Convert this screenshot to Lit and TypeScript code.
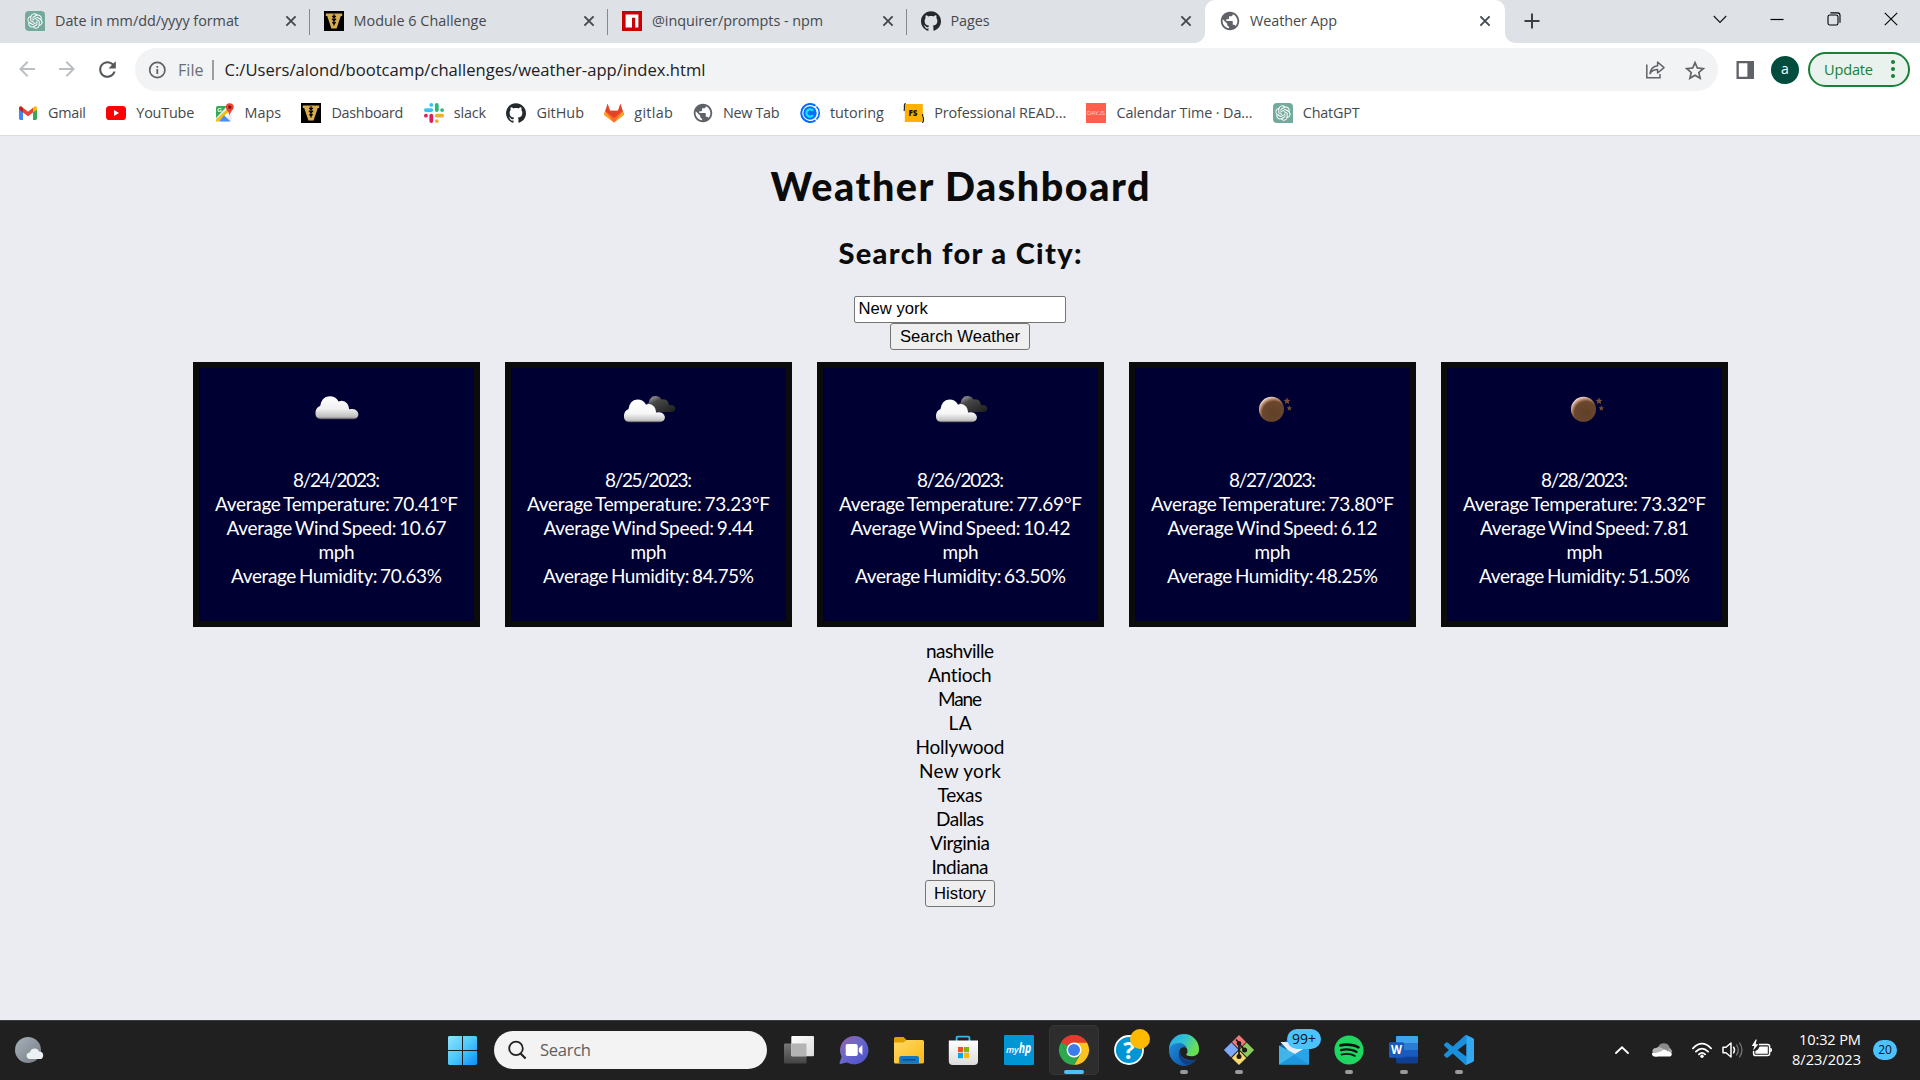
import { LitElement, html, css, svg, nothing } from "lit";
import { customElement, property } from "lit/decorators.js";

/** A single line of text tracked so that it occupies the given width. */
@customElement("fit-text")
class FitText extends LitElement {
  @property() text = "";
  @property({ type: Number }) w = 0;
  static styles = css`
    :host { display: inline-block; white-space: nowrap; text-align: left; }
    .t { display: inline-block; }
  `;
  updated() {
    const t = this.renderRoot.querySelector(".t") as HTMLElement;
    t.style.letterSpacing = "0px";
    const natural = t.getBoundingClientRect().width;
    t.style.letterSpacing = (this.w - natural) / Math.max(1, this.text.length - 1) + "px";
    this.style.width = this.w + "px";
  }
  render() {
    return html`<span class="t">${this.text}</span>`;
  }
}

const fit = (text: string, w: number) => html`<fit-text .text=${text} .w=${w}></fit-text>`;

const pic = (w: number, h: number, box: string, content: unknown) =>
  html`<svg class="pic" width=${w} height=${h} viewBox=${box}>${content}</svg>`;

const knot = "M22.2819 9.8211a5.9847 5.9847 0 0 0-.5157-4.9108 6.0462 6.0462 0 0 0-6.5098-2.9A6.0651 6.0651 0 0 0 4.9807 4.1818a5.9847 5.9847 0 0 0-3.9977 2.9 6.0462 6.0462 0 0 0 .7427 7.0966 5.98 5.98 0 0 0 .511 4.9107 6.051 6.051 0 0 0 6.5146 2.9001A5.9847 5.9847 0 0 0 13.2599 24a6.0557 6.0557 0 0 0 5.7718-4.2058 5.9894 5.9894 0 0 0 3.9977-2.9001 6.0557 6.0557 0 0 0-.7475-7.0729zm-9.022 12.6081a4.4755 4.4755 0 0 1-2.8764-1.0408l.1419-.0804 4.7783-2.7582a.7948.7948 0 0 0 .3927-.6813v-6.7369l2.02 1.1686a.071.071 0 0 1 .038.052v5.5826a4.504 4.504 0 0 1-4.4945 4.4944zm-9.6607-4.1254a4.4708 4.4708 0 0 1-.5346-3.0137l.142.0852 4.783 2.7582a.7712.7712 0 0 0 .7806 0l5.8428-3.3685v2.3324a.0804.0804 0 0 1-.0332.0615L9.74 19.9502a4.4992 4.4992 0 0 1-6.1408-1.6464zM2.3408 7.8956a4.485 4.485 0 0 1 2.3655-1.9728V11.6a.7664.7664 0 0 0 .3879.6765l5.8144 3.3543-2.0201 1.1685a.0757.0757 0 0 1-.071 0l-4.8303-2.7865A4.504 4.504 0 0 1 2.3408 7.872zm16.5963 3.8558L13.1038 8.364 15.1192 7.2a.0757.0757 0 0 1 .071 0l4.8303 2.7913a4.4944 4.4944 0 0 1-.6765 8.1042v-5.6772a.79.79 0 0 0-.407-.667zm2.0107-3.0231l-.142-.0852-4.7735-2.7818a.7759.7759 0 0 0-.7854 0L9.409 9.2297V6.8974a.0662.0662 0 0 1 .0284-.0615l4.8303-2.7866a4.4992 4.4992 0 0 1 6.6802 4.66zM8.3065 12.863l-2.02-1.1638a.0804.0804 0 0 1-.038-.0567V6.0742a4.4992 4.4992 0 0 1 7.3757-3.4537l-.142.0805L8.704 5.459a.7948.7948 0 0 0-.3927.6813zm1.0976-2.3654l2.602-1.4998 2.6069 1.4998v2.9994l-2.5974 1.4997-2.6067-1.4997Z";
const octocat = "M12 .297c-6.63 0-12 5.373-12 12 0 5.303 3.438 9.8 8.205 11.385.6.113.82-.258.82-.577 0-.285-.01-1.04-.015-2.04-3.338.724-4.042-1.61-4.042-1.61C4.422 18.07 3.633 17.7 3.633 17.7c-1.087-.744.084-.729.084-.729 1.205.084 1.838 1.236 1.838 1.236 1.07 1.835 2.809 1.305 3.495.998.108-.776.417-1.305.76-1.605-2.665-.3-5.466-1.332-5.466-5.93 0-1.31.465-2.38 1.235-3.22-.135-.303-.54-1.523.105-3.176 0 0 1.005-.322 3.3 1.23.96-.267 1.98-.399 3-.405 1.02.006 2.04.138 3 .405 2.28-1.552 3.285-1.23 3.285-1.23.645 1.653.24 2.873.12 3.176.765.84 1.23 1.91 1.23 3.22 0 4.61-2.805 5.625-5.475 5.92.42.36.81 1.096.81 2.22 0 1.606-.015 2.896-.015 3.286 0 .315.21.69.825.57C20.565 22.092 24 17.592 24 12.297c0-6.627-5.373-12-12-12";
const globePath = "M12 2C6.48 2 2 6.48 2 12s4.48 10 10 10 10-4.48 10-10S17.52 2 12 2zm-1 17.93c-3.95-.49-7-3.85-7-7.93 0-.62.08-1.21.21-1.79L9 15v1c0 1.1.9 2 2 2v1.93zm6.9-2.54c-.26-.81-1-1.39-1.9-1.39h-1v-3c0-.55-.45-1-1-1H8v-2h2c.55 0 1-.45 1-1V7h2c1.1 0 2-.9 2-2v-.41c2.93 1.19 5 4.06 5 7.41 0 2.08-.8 3.97-2.1 5.39z";
const spotifyPath = "M12 0C5.4 0 0 5.4 0 12s5.4 12 12 12 12-5.4 12-12S18.66 0 12 0zm5.521 17.34c-.24.359-.66.48-1.021.24-2.82-1.74-6.36-2.101-10.561-1.141-.418.122-.779-.179-.899-.539-.12-.421.18-.78.54-.9 4.56-1.021 8.52-.6 11.64 1.32.42.18.479.659.301 1.02zm1.44-3.3c-.301.42-.841.6-1.262.3-3.239-1.98-8.159-2.58-11.939-1.38-.479.12-1.02-.12-1.14-.6-.12-.48.12-1.021.6-1.141C9.6 9.9 15 10.561 18.72 12.84c.361.181.54.78.241 1.2zm.12-3.36C15.24 8.4 8.82 8.16 5.16 9.301c-.6.179-1.2-.181-1.38-.721-.18-.601.18-1.2.72-1.381 4.26-1.26 11.28-1.02 15.721 1.621.539.3.719 1.02.419 1.56-.299.421-1.02.599-1.559.3z";
const codePath = "M23.15 2.587L18.21.21a1.494 1.494 0 0 0-1.705.29l-9.46 8.63-4.12-3.128a.999.999 0 0 0-1.276.057L.327 7.261A1 1 0 0 0 .326 8.74L3.899 12 .326 15.26a1 1 0 0 0 .001 1.479L1.65 17.94a.999.999 0 0 0 1.276.057l4.12-3.128 9.46 8.63a1.492 1.492 0 0 0 1.704.29l4.942-2.377A1.5 1.5 0 0 0 24 20.06V3.939a1.5 1.5 0 0 0-.85-1.352zm-5.146 14.861L10.826 12l7.178-5.448v10.896z";

/* ---- favicons, all 20 x 20 ---- */
const fav = {
  gpt: pic(20, 20, "0 0 20 20", svg`<path fill="#74aa9c" d="M4 0H16Q20 0 20 4V20H4Q0 20 0 16V4Q0 0 4 0Z"/><path transform="translate(2.3 2.3) scale(.64)" fill="#fff" d=${knot} />`),
  vand: pic(20, 20, "0 0 20 20", svg`<rect width="20" height="20" fill="#000"/><path d="M1.8 2.6H18.2V5H16.8L12.6 17.4H7.4L3.2 5H1.8Z" fill="#d8ab4e"/><path d="M10 3.2V14.6M10 6.6 8.2 5M10 6.6l1.8-1.6M10 9.8 8 7.8M10 9.8l2-2M10 12.8 8.4 11.2M10 12.8l1.6-1.6" stroke="#000" stroke-width="1.3" fill="none"/>`),
  npm: pic(20, 20, "0 0 20 20", svg`<rect width="20" height="20" fill="#cb0000"/><path d="M3.6 3.6H16.4V16.4H13.2V6.8H10V16.4H3.6Z" fill="#fff"/>`),
  github: pic(20, 20, "0 0 24 24", svg`<path fill="#24292e" d=${octocat} />`),
  globe: pic(20, 20, "1.2 1.2 21.6 21.6", svg`<path fill="#5f6368" d=${globePath} />`),
  gmail: pic(20, 20, "0 0 20 20", svg`<path d="M1 6V15.6Q1 17 2.4 17H5V9Z" fill="#4285f4"/><path d="M19 6V15.6Q19 17 17.6 17H15V9Z" fill="#34a853"/><path d="M5 4.8 10 8.7 15 4.8V9.4L10 13.2 5 9.4Z" fill="#ea4335"/><path d="M1 5.2Q1.2 2.4 3.8 3.6L5 4.8V9.4L1 6.5Z" fill="#c5221f"/><path d="M19 5.2Q18.8 2.4 16.2 3.6L15 4.8V9.4L19 6.5Z" fill="#fbbc04"/>`),
  youtube: pic(20, 20, "0 0 20 20", svg`<rect y="3" width="20" height="14" rx="3.6" fill="#f00"/><path d="M8 7V13L13 10Z" fill="#fff"/>`),
  maps: pic(20, 20, "0 0 20 20", svg`<rect x="1" y="3" width="15.5" height="15.5" rx="1.5" fill="#e8eaed"/><path d="M1 5Q1 3 3 3H12L1 15Z" fill="#34a853"/><path d="M1 18 13.5 6 16.5 9 7 18.5H2Z" fill="#fff"/><path d="M1 16.5V18.5H3.5L14.8 7.5 13 5.5Z" fill="#fbbc04"/><path d="M9 12.2 15.6 18.5H4Z" fill="#4b8df8"/><text x="2.2" y="9" font-family="Liberation Sans" font-weight="700" font-size="6" fill="#fff">G</text><path d="M14.6 12.6Q14 9 11.6 6.8Q9.4 2.3 13 .6Q17.5-.6 18.8 3.6Q18.8 6 17 7.6Q15 10 14.6 12.6Z" fill="#ea4335"/><circle cx="14.8" cy="4.2" r="1.6" fill="#811411"/>`),
  slack: pic(20, 20, "0 0 20 20", svg`<rect x="5.4" y="0" width="3.8" height="3.8" rx="1.9" fill="#36c5f0"/><rect x="0" y="5.2" width="9.2" height="3.8" rx="1.9" fill="#36c5f0"/><rect x="10.9" y="0" width="3.8" height="9" rx="1.9" fill="#2eb67d"/><rect x="16.2" y="5.2" width="3.8" height="3.8" rx="1.9" fill="#2eb67d"/><rect x="0" y="10.8" width="3.8" height="3.8" rx="1.9" fill="#e01e5a"/><rect x="5.4" y="10.8" width="3.8" height="9.2" rx="1.9" fill="#e01e5a"/><rect x="10.9" y="10.8" width="9.1" height="3.8" rx="1.9" fill="#ecb22e"/><rect x="10.9" y="16.2" width="3.8" height="3.8" rx="1.9" fill="#ecb22e"/>`),
  gitlab: pic(20, 20, "0 0 20 20", svg`<path d="M10 19.4 0 11.8 1.2 7.4H18.8L20 11.8Z" fill="#fc6d26"/><path d="M10 19.4 0 11.8 1.2 8Z" fill="#fca326"/><path d="M10 19.4 20 11.8 18.8 8Z" fill="#fca326"/><path d="M1.2 8 3.6.6 6.2 8ZM18.8 8 16.4.6 13.8 8Z" fill="#e24329"/><path d="M1.2 8H6.2L10 19.4ZM18.8 8H13.8L10 19.4Z" fill="#fc6d26"/><path d="M1.2 8H18.8L10 15Z" fill="#e24329"/>`),
  calendly: pic(20, 20, "0 0 20 20", svg`<path d="M15.5 2.7A9 9 0 1 0 15.5 17.3" fill="none" stroke="#006bff" stroke-width="2"/><path d="M16.5 3.5A9 9 0 0 1 16.5 16.5" fill="none" stroke="#006bff" stroke-width="1.6"/><circle cx="10" cy="10" r="6.7" fill="#0b6cff"/><path d="M12.9 7.8A3.6 3.6 0 1 0 12.9 12.2" fill="none" stroke="#0ae8f0" stroke-width="2.2"/>`),
  fs: pic(20, 20, "0 0 20 20", svg`<rect x=".8" y="1" width="18" height="18" fill="#ffb100"/><path d="M1.8.5Q.4.5.4 2V5.5Q.4 7 0 8M18.6 11V13Q19.4 14 19.4 15V18Q19.4 19.5 18 19.5" stroke="#222" stroke-width="1.2" fill="none"/><text x="4.4" y="13.2" font-family="Open Sans" font-weight="800" font-size="8" fill="#111">FS</text>`),
  dayjs: pic(20, 20, "0 0 20 20", svg`<rect width="20" height="20" fill="#ff5f4c"/><text x="1" y="12.2" textLength="18" lengthAdjust="spacingAndGlyphs" font-family="Lato" font-size="5.8" fill="#ffd5cf">DAY.JS</text>`),
};

const tabs = [
  { icon: fav.gpt, title: "Date in mm/dd/yyyy format", w: 184 },
  { icon: fav.vand, title: "Module 6 Challenge", w: 133 },
  { icon: fav.npm, title: "@inquirer/prompts - npm", w: 171 },
  { icon: fav.github, title: "Pages", w: 39 },
  { icon: fav.globe, title: "Weather App", w: 87, active: true },
];

const bookmarks: [unknown, string, number][] = [
  [fav.gmail, "Gmail", 38], [fav.youtube, "YouTube", 58], [fav.maps, "Maps", 36.5],
  [fav.vand, "Dashboard", 72], [fav.slack, "slack", 32.5], [fav.github, "GitHub", 47.5],
  [fav.gitlab, "gitlab", 38.5], [fav.globe, "New Tab", 56.5], [fav.calendly, "tutoring", 54],
  [fav.fs, "Professional READ...", 132], [fav.dayjs, "Calendar Time · Da...", 136], [fav.gpt, "ChatGPT", 57],
];

/* ---- weather pictures ---- */
const cloudShape = "M8 44Q-1 43 0 33Q1 26 7 24Q9 10 21 9Q31 9 35 17Q43 14 48 20Q51 24 51 29Q63 27 65 36Q65 44 56 44Z";
const few = pic(80, 60, "0 0 80 60", svg`
  <defs><linearGradient id="cl" x1="0" y1="0" x2="0" y2="1"><stop offset="0" stop-color="#fff"/><stop offset=".55" stop-color="#f0f0f0"/><stop offset=".9" stop-color="#bdbdbd"/><stop offset="1" stop-color="#555"/></linearGradient></defs>
  <path transform="translate(18.5 12.2) scale(.66)" d=${cloudShape} fill="url(#cl)"/>`);
const broken = pic(80, 60, "0 0 80 60", svg`
  <defs><linearGradient id="c2" x1="0" y1="0" x2="0" y2="1"><stop offset="0" stop-color="#fff"/><stop offset=".6" stop-color="#f8f8f8"/><stop offset=".92" stop-color="#c4c4c4"/><stop offset="1" stop-color="#555"/></linearGradient>
  <linearGradient id="c3" x1="0" y1="0" x2="1" y2="1"><stop offset="0" stop-color="#aaa"/><stop offset=".22" stop-color="#777"/><stop offset=".35" stop-color="#484848"/><stop offset="1" stop-color="#1c1c1c"/></linearGradient></defs>
  <path transform="translate(36.5 13.8) scale(.46)" d=${cloudShape} fill="url(#c3)"/>
  <path transform="translate(15 15.8) scale(.63 .645)" d=${cloudShape} fill="url(#c2)"/>`);
const moon = pic(80, 60, "0 0 80 60", svg`
  <defs><radialGradient id="mo" cx=".6" cy=".65" r=".66"><stop offset="0" stop-color="#604028"/><stop offset=".7" stop-color="#6b472f"/><stop offset=".82" stop-color="#a9785a"/><stop offset="1" stop-color="#efd8ca"/></radialGradient></defs>
  <circle cx="38.5" cy="31.3" r="12.5" fill="url(#mo)"/>
  <path d="m54 19.5 1 2.3 2.4.2-1.8 1.6.6 2.5-2.2-1.4-2.2 1.4.6-2.5-1.8-1.6 2.4-.2ZM56.3 27.5l.8 1.8 1.9.2-1.5 1.2.5 2-1.7-1.1-1.7 1.1.5-2-1.5-1.2 1.9-.2Z" fill="#765038"/>`);

const days = [
  { icon: few, date: "8/24/2023:", t: "70.41", s: "10.67", h: "70.63", sw: 220, hw: 211 },
  { icon: broken, date: "8/25/2023:", t: "73.23", s: "9.44", h: "84.75", sw: 210, hw: 211 },
  { icon: broken, date: "8/26/2023:", t: "77.69", s: "10.42", h: "63.50", sw: 220, hw: 211 },
  { icon: moon, date: "8/27/2023:", t: "73.80", s: "6.12", h: "48.25", sw: 210, hw: 211 },
  { icon: moon, date: "8/28/2023:", t: "73.32", s: "7.81", h: "51.50", sw: 209, hw: 211 },
];

const cities: [string, number][] = [
  ["nashville", 68], ["Antioch", 64], ["Mane", 44], ["LA", 23], ["Hollywood", 89],
  ["New york", 82], ["Texas", 45], ["Dallas", 48], ["Virginia", 60], ["Indiana", 57],
];

/* ---- taskbar pictures ---- */
const tb = {
  taskview: pic(32, 32, "0 0 32 32", svg`<defs><linearGradient id="tv" x1="0" y1="0" x2="1" y2="1"><stop offset="0" stop-color="#fff"/><stop offset="1" stop-color="#dcdcdc"/></linearGradient><linearGradient id="tw" x1="0" y1="0" x2="0" y2="1"><stop offset="0" stop-color="#777"/><stop offset="1" stop-color="#444"/></linearGradient></defs><rect x="1" y="9.5" width="22.5" height="20" rx="1" fill="url(#tw)"/><rect x="8.3" y="2" width="22.7" height="20.3" rx="1" fill="url(#tv)"/><path d="M8.3 9.5H22.5Q23.5 9.5 23.5 10.5V22.3H9.3Q8.3 22.3 8.3 21.3Z" fill="#b4b4b4"/>`),
  chat: pic(32, 32, "0 0 32 32", svg`<defs><linearGradient id="ch" x1="0" y1="0" x2="1" y2="1"><stop offset="0" stop-color="#9a5fa8"/><stop offset=".45" stop-color="#6a68c8"/><stop offset=".7" stop-color="#5b5bd0"/><stop offset="1" stop-color="#4f4fc0"/></linearGradient></defs><path d="M16 2A14.2 14.2 0 1 1 9 28.4L2.4 30Q1.2 30 1.6 28.8L3.6 22.8A14.2 14.2 0 0 1 16 2Z" fill="url(#ch)"/><rect x="7.7" y="10" width="12" height="12" rx="1.8" fill="#fff"/><path d="M20.8 14.2 24.4 11V21L20.8 17.8Z" fill="#fff"/>`),
  files: pic(32, 32, "0 0 32 32", svg`<defs><linearGradient id="fo" x1="0" y1="0" x2="1" y2="1"><stop offset="0" stop-color="#ffd96a"/><stop offset="1" stop-color="#fbb911"/></linearGradient></defs><path d="M1 4.5Q1 3 2.5 3H10.5L13.5 6H28Q29 6 29 7V12H1Z" fill="#e0a000"/><path d="M1 8.6H10.4L13.6 6H29.5Q31 6 31 7.5V28Q31 29.5 29.5 29.5H2.5Q1 29.5 1 28Z" fill="url(#fo)"/><path d="M6.2 29.5V24Q6.2 22 8.2 22H24Q26 22 26 24V29.5Z" fill="#0f78c8"/><rect x="9.5" y="25.1" width="13" height="1.4" rx=".7" fill="#0a4a86"/>`),
  store: pic(32, 32, "0 0 32 32", svg`<defs><linearGradient id="st" x1="0" y1="0" x2="0" y2="1"><stop offset="0" stop-color="#fff"/><stop offset="1" stop-color="#dcdcdc"/></linearGradient></defs><path d="M8.6 8V3.8Q8.6 2.6 9.8 2.6H20.2Q21.4 2.6 21.4 3.8V8" fill="none" stroke="#35b8ea" stroke-width="1.9"/><path d="M.8 6.5H30V27Q30 31 26 31H4.8Q.8 31 .8 27Z" fill="url(#st)"/><rect x="10" y="13" width="5" height="5.2" fill="#f25022"/><rect x="16" y="13" width="5" height="5.2" fill="#7fba00"/><rect x="10" y="19" width="5" height="5.2" fill="#00a4ef"/><rect x="16" y="19" width="5" height="5.2" fill="#ffb900"/>`),
  myhp: pic(32, 32, "0 0 32 32", svg`<rect x="1" y="1" width="30" height="30" rx="1" fill="#0096d6"/><text x="3" y="19" textLength="12.6" lengthAdjust="spacingAndGlyphs" font-family="Open Sans" font-style="italic" font-weight="600" font-size="9.4" fill="#fff">my</text><text x="15.8" y="19.2" textLength="12.5" lengthAdjust="spacingAndGlyphs" font-family="Open Sans" font-style="italic" font-weight="700" font-size="14" fill="#fff">hp</text>`),
  chrome: pic(32, 32, "0 0 32 32", svg`<path d="M16 16 3 8.5A15 15 0 0 1 29 8.5Z" fill="#e33b2e"/><path d="M16 8.5H29A15 15 0 0 1 16 31L22.5 19.8Z" fill="#fcc31e"/><path d="M9.5 19.8 3 8.5A15 15 0 0 0 16 31L22.5 19.8Z" fill="#2da94f"/><path d="M9.5 12.2 3 8.5A15 15 0 0 1 29 8.5H16Z" fill="#e33b2e"/><path d="M9.5 19.7 3 8.5 10 12Z" fill="#2da94f"/><circle cx="16" cy="16" r="7.5" fill="#fff"/><circle cx="16" cy="16" r="6" fill="#3b7ded"/>`),
  help: pic(40, 40, "0 0 40 40", svg`<circle cx="20" cy="20" r="14" fill="#0096d6" stroke="#fff" stroke-width="1.8"/><text x="20" y="28.5" text-anchor="middle" font-family="Open Sans" font-weight="700" font-size="24" fill="#fff">?</text><circle cx="31" cy="9" r="10" fill="#ffb900"/>`),
  edge: pic(32, 32, "0 0 32 32", svg`<defs><linearGradient id="e1" x1="0" y1="0" x2="1" y2=".4"><stop offset="0" stop-color="#2ba6e6"/><stop offset=".5" stop-color="#2fc1d8"/><stop offset="1" stop-color="#6be04c"/></linearGradient><linearGradient id="e2" x1="0" y1="0" x2="1" y2="1"><stop offset="0" stop-color="#1f8fdd"/><stop offset="1" stop-color="#0b4fa0"/></linearGradient></defs><path d="M1 15A15 15 0 0 1 31 15Q31.4 21.6 24.5 22.2Q18.6 22.4 18.2 20.6Q20.6 18.2 18.6 14Q15 9 9 10Q3 11.6 1 17Z" fill="url(#e1)"/><path d="M1 17Q3 9.6 10.5 10.2Q8.5 24 23 26.6Q27 27 28.8 24.6A15 15 0 0 1 1 17Z" fill="#0f62b8"/><path d="M1 15Q3.5 9 11 9Q16.5 9 18.4 13.6Q11.8 11.8 11.4 18.6Q12.4 27.6 20.8 30.2A15 15 0 0 1 1 15Z" fill="url(#e2)"/><path d="M12 17Q12 26 22 26.8Q27 26.8 28.8 24.6Q25.8 30.4 19 30.9Q10.4 28 10.8 19Z" fill="#123e82"/>`),
  git: pic(32, 32, "0 0 32 32", svg`<path d="M16 1 23 8 16 15 9 8Z" fill="#f07a78"/><path d="M8.4 8.6 15.4 15.8 8 23.2.9 16Z" fill="#7fa8f8"/><path d="M23.6 8.6 31.1 16 24 23.2 16.6 15.8Z" fill="#88cc5c"/><path d="M16 16.6 23.2 24 16 31 8.8 24Z" fill="#f8da70"/><path d="M13 5.5 16 9V23M16.4 10.5 21.4 15.6" stroke="#201818" stroke-width="1.7" fill="none"/><circle cx="16" cy="9.4" r="2.3" fill="#201818"/><circle cx="21.6" cy="16" r="2.5" fill="#201818"/><circle cx="16" cy="22.6" r="2.5" fill="#201818"/>`),
  mail: pic(48, 40, "-5 0 48 40", svg`<path d="M4 16 19 5 34 16V24H4Z" fill="#1060a8"/><path d="M5.5 12H32V24L19 27Z" fill="#e8eef4"/><path d="M4 15.5 21 24.5 34 34.5H4Z" fill="#41b4ec"/><path d="M34 15.5 4 34.5H34Z" fill="#1c96dc"/><path d="M34 15.5 19 24.7 34 34.5Z" fill="#2aa4e6"/><rect x="12" y="-1" width="34" height="20" rx="10" fill="#4cc2ff"/><text x="17" y="14" textLength="24" lengthAdjust="spacingAndGlyphs" font-family="Open Sans" font-size="14.4" fill="#111">99+</text>`),
  spotify: pic(32, 32, "0 0 32 32", svg`<circle cx="16" cy="16" r="12" fill="#111"/><path transform="translate(1.4 1.4) scale(1.217)" fill="#1ed760" d=${spotifyPath} />`),
  word: pic(32, 32, "0 0 32 32", svg`<rect x="8" y="2" width="22" height="7.5" rx="1" fill="#41a5ee"/><rect x="8" y="9" width="22" height="7.3" fill="#2b7cd3"/><rect x="8" y="16" width="22" height="7" fill="#185abd"/><path d="M8 22.8H30V28Q30 29.4 28.6 29.4H9.4Q8 29.4 8 28Z" fill="#103f91"/><rect x="1" y="8.2" width="15" height="15.5" rx="1.2" fill="#185abd"/><text x="3" y="20.2" textLength="11" lengthAdjust="spacingAndGlyphs" font-family="Open Sans" font-weight="700" font-size="12" fill="#fff">W</text>`),
  code: pic(32, 32, "0 0 32 32", svg`<path transform="translate(1 1) scale(1.25)" fill="#1a8fdb" d=${codePath} /><path d="M23.5 1.2 30 4.3Q31 5 31 6V26Q31 27 30 27.7L23.5 30.8Z" fill="#32aaf2"/>`),
};

const apps: { icon: unknown; mark?: string }[] = [
  { icon: tb.taskview }, { icon: tb.chat }, { icon: tb.files }, { icon: tb.store }, { icon: tb.myhp },
  { icon: tb.chrome, mark: "on" }, { icon: tb.help }, { icon: tb.edge, mark: "dot" }, { icon: tb.git, mark: "dot" },
  { icon: tb.mail }, { icon: tb.spotify, mark: "dot" }, { icon: tb.word, mark: "dot" }, { icon: tb.code, mark: "dot" },
];

@customElement("app-root")
class AppRoot extends LitElement {
  static styles = css`
    :host { display: flex; flex-direction: column; width: 1920px; height: 1080px; overflow: hidden; background: #ebecf1; font-family: "Open Sans", "Noto Sans", sans-serif; }
    * { box-sizing: border-box; }
    .pic { display: block; flex: none; overflow: visible; }

    .strip { display: flex; height: 43px; flex: none; background: #dee1e6; color: #45494d; font-size: 14.4px; }
    .lead { width: 11px; }
    .tab { display: flex; align-items: center; flex: none; width: 298.5px; height: 43px; padding: 0 13px 2px 14px; }
    .tab.sep { background: linear-gradient(#85898e, #85898e) right 9px / 1px 26px no-repeat; }
    .tab .ttl { margin-left: 10px; flex: 1; }
    .tab.active { position: relative; width: 300px; background: #fff; border-radius: 10px 10px 0 0; padding: 0 14px 2px 15px; }
    .tab.active::before, .tab.active::after { content: ""; position: absolute; bottom: 0; width: 10px; height: 10px; }
    .tab.active::before { left: -10px; background: radial-gradient(circle at 0 0, transparent 9.5px, #fff 10px); }
    .tab.active::after { right: -10px; background: radial-gradient(circle at 100% 0, transparent 9.5px, #fff 10px); }
    .plus { display: flex; align-items: center; padding: 0 0 1px 19px; flex: 1; }
    .wins { display: flex; align-items: center; height: 37px; padding-right: 1px; }
    .wins span { display: flex; width: 57px; justify-content: center; }

    .bar { display: flex; align-items: center; height: 53px; flex: none; background: #fff; padding: 0 10px 0 15px; }
    .nav { display: flex; flex: none; gap: 16px; width: 120px; }
    .omni { display: flex; align-items: center; flex: none; width: 1583px; height: 43px; border-radius: 22px; background: #f1f3f4; padding-left: 12px; font-size: 16.6px; color: #202124; }
    .file { color: #6a6e72; margin-left: 11px; font-size: 16px; }
    .rule { width: 2px; height: 20px; background: #9a9da1; margin: 0 11px 0 8px; }
    .url { flex: 1; }
    .acts { display: flex; gap: 16px; padding-right: 11px; }
    .side { margin-left: 17px; }
    .ava { flex: none; width: 28px; height: 28px; border-radius: 50%; background: #004d40; color: #fff; display: flex; align-items: center; justify-content: center; font-size: 14px; margin: 0 9px 0 16px; padding-bottom: 2px; }
    .upd { display: flex; align-items: center; flex: none; width: 102px; height: 35px; border: 2px solid #188038; border-radius: 18px; background: #e9f2ec; color: #188038; font-size: 14.6px; padding: 0 13px 1px 14px; justify-content: space-between; }

    .marks { display: flex; height: 40px; flex: none; align-items: flex-start; padding: 7px 0 0 18px; gap: 20.3px; background: #fff; border-bottom: 1px solid #d9dbde; color: #45494d; font-size: 14.4px; }
    .mark { display: flex; align-items: center; gap: 10px; height: 20px; }
    .mark fit-text { margin-bottom: 2px; }

    .page { flex: 1; display: flex; flex-direction: column; align-items: center; font-family: Lato, sans-serif; color: #0b0b0b; }
    h1, h2 { margin: 0; font-weight: 900; }
    h1 { font-size: 39.5px; line-height: 48px; margin-top: 26px; }
    h2 { font-size: 29px; line-height: 36px; margin-top: 25px; }
    .field { width: 212px; height: 27px; margin: 25px 0 0; border: 1px solid #767676; border-radius: 2px; padding: 0 4px 1px 3.5px; font: 16.67px "Liberation Sans", sans-serif; color: #000; background: #fff; }
    .btn { height: 27px; padding: 0; border: 1px solid #767676; border-radius: 3px; background: #efefef; font: 16.67px "Liberation Sans", sans-serif; color: #000; text-align: center; }
    .go { width: 140px; }
    .hist { width: 70px; margin-top: 1px; }
    .cards { display: flex; gap: 25px; margin-top: 12px; padding-left: 1px; }
    .card { width: 287px; height: 265px; border: 6px solid #0b0b0b; background: #000033; color: #fff; display: flex; flex-direction: column; align-items: center; font-size: 19px; word-spacing: -1.6px; padding-top: 10px; }
    .lines { display: flex; flex-direction: column; align-items: center; line-height: 24px; margin-top: 30px; }
    .list { display: flex; flex-direction: column; align-items: center; line-height: 24px; font-size: 19px; color: #000; margin-top: 12px; }
    .line { height: 24px; white-space: nowrap; }

    .task { display: flex; align-items: center; height: 60px; flex: none; background: #202020; border-top: 1px solid #3b3d3f; padding-bottom: 1px; color: #fff; }
    .wx { width: 434px; padding-left: 14px; }
    .start { margin-left: 14px; }
    .find { display: flex; align-items: center; width: 273px; height: 38px; border-radius: 19px; background: #f3f3f3; margin: 0 4.5px 0 17px; padding-left: 13px; gap: 13px; font-size: 16.6px; color: #606060; }
    .find fit-text { margin-bottom: 1px; }
    .apps { display: flex; }
    .cell { position: relative; width: 55px; height: 50px; display: flex; align-items: center; justify-content: center; }
    .cell.on::before { content: ""; position: absolute; inset: 0 2.5px; border-radius: 5px; background: #2d2d2d; border: 1px solid #363636; }
    .cell .pic { position: relative; }
    .pip { position: absolute; bottom: 1px; width: 8px; height: 4px; border-radius: 2px; background: #9a9a9a; }
    .pip.on { width: 20px; background: #4cc2ff; }
    .tray { display: flex; align-items: center; margin-left: auto; padding-right: 23px; }
    .drive { margin: 0 20px 0 23px; }
    .sound { margin: 0 2px 0 1px; }
    .clock { display: flex; flex-direction: column; align-items: flex-end; width: 80px; font-size: 14.6px; line-height: 20px; margin: 0 12px 2px 9px; }
    .count { width: 24px; height: 20px; border-radius: 10px; background: #4cc2ff; color: #111; font-size: 12px; line-height: 20px; text-align: center; }
  `;

  private closeX() {
    return pic(12, 12, "0 0 12 12", svg`<path d="M1.4 1.4 10.6 10.6M10.6 1.4 1.4 10.6" stroke="#45494d" stroke-width="1.9"/>`);
  }

  private renderTabs() {
    return html`<div class="strip">
      <div class="lead"></div>
      ${tabs.map((t, i) => html`<div class="tab ${t.active ? "active" : i < 3 ? "sep" : ""}">
        ${t.icon}<span class="ttl">${fit(t.title, t.w)}</span>${this.closeX()}</div>`)}
      <div class="plus">${pic(16, 16, "0 0 16 16", svg`<path d="M8 .5V15.5M.5 8H15.5" stroke="#3c4043" stroke-width="2"/>`)}</div>
      <div class="wins">
        <span>${pic(14, 14, "0 0 14 14", svg`<path d="M.8 4 7 10.4 13.2 4" fill="none" stroke="#111" stroke-width="1.1"/>`)}</span>
        <span>${pic(14, 14, "0 0 14 14", svg`<path d="M.5 7.5H13.5" stroke="#000" stroke-width="1.2"/>`)}</span>
        <span>${pic(14, 14, "0 0 14 14", svg`<rect x="1" y="3" width="10" height="10" rx="1.8" fill="none" stroke="#000" stroke-width="1.1"/><path d="M3.4 .9H10.6Q13 .9 13 3.3V10.8" fill="none" stroke="#000" stroke-width="1.1"/>`)}</span>
        <span>${pic(14, 14, "0 0 14 14", svg`<path d="M.8.8 13.2 13.2M13.2.8.8 13.2" stroke="#000" stroke-width="1.1"/>`)}</span>
      </div>
    </div>`;
  }

  private renderToolbar() {
    const back = "M20 11H7.83l5.59-5.59L12 4l-8 8 8 8 1.41-1.41L7.83 13H20v-2z";
    return html`<div class="bar">
      <div class="nav">
        ${pic(24, 24, "0 0 24 24", svg`<path d=${back} fill="#bcbfc2"/>`)}
        ${pic(24, 24, "0 0 24 24", svg`<path d=${back} transform="matrix(-1 0 0 1 24 0)" fill="#bcbfc2"/>`)}
        ${pic(25, 25, "0 0 24 24", svg`<path d="M17.65 6.35C16.2 4.9 14.21 4 12 4c-4.42 0-7.99 3.58-7.99 8s3.57 8 7.99 8c3.73 0 6.84-2.55 7.73-6h-2.08c-.82 2.33-3.04 4-5.65 4-3.31 0-6-2.69-6-6s2.69-6 6-6c1.66 0 3.14.69 4.22 1.78L13 11h7V4l-2.35 2.35z" fill="#54585c"/>`)}
      </div>
      <div class="omni">
        ${pic(20, 20, "0 0 20 20", svg`<circle cx="10.3" cy="10" r="7.6" fill="none" stroke="#5f6368" stroke-width="1.7"/><path d="M10.3 9V14M10.3 6V7.8" stroke="#5f6368" stroke-width="1.8"/>`)}
        <span class="file">${fit("File", 25.5)}</span><span class="rule"></span>
        <span class="url">${fit("C:/Users/alond/bootcamp/challenges/weather-app/index.html", 481)}</span>
        <span class="acts">
          ${pic(24, 24, "0 0 24 24", svg`<path d="M3.8 6.5V19.8H17V16" fill="none" stroke="#5f6368" stroke-width="1.5"/><path d="M7 15.5Q8 8.6 14.6 7.8V4L21 9.6 14.6 15V11.4Q9.6 11.4 7 15.5Z" fill="none" stroke="#5f6368" stroke-width="1.5" stroke-linejoin="round"/>`)}
          ${pic(24, 24, "2 1.5 20 20", svg`<path transform="translate(1.7 1.8) scale(.86)" d="M22 9.24l-7.19-.62L12 2 9.19 8.63 2 9.24l5.46 4.73L5.82 21 12 17.27 18.18 21l-1.63-7.03L22 9.24zM12 15.4l-3.76 2.27 1-4.28-3.32-2.88 4.38-.38L12 6.1l1.71 4.04 4.38.38-3.32 2.88 1 4.28L12 15.4z" fill="#5f6368"/>`)}
        </span>
      </div>
      <span class="side">${pic(20, 20, "0 0 20 20", svg`<path d="M1.5 1H19V19H1.5ZM3.8 3.3V16.7H12.4V3.3Z" fill="#5f6368" fill-rule="evenodd"/>`)}</span>
      <span class="ava">a</span>
      <span class="upd">${fit("Update", 49)}${pic(4, 18, "0 0 4 18", svg`<circle cx="2" cy="2" r="2" fill="#188038"/><circle cx="2" cy="9" r="2" fill="#188038"/><circle cx="2" cy="16" r="2" fill="#188038"/>`)}</span>
    </div>
    <div class="marks">${bookmarks.map(([i, t, w]) => html`<span class="mark">${i}${fit(t, w)}</span>`)}</div>`;
  }

  private renderPage() {
    return html`<main class="page">
      <h1>${fit("Weather Dashboard", 379)}</h1>
      <h2>${fit("Search for a City:", 243)}</h2>
      <input class="field" .value=${"New york"} />
      <button class="btn go">Search Weather</button>
      <section class="cards">${days.map((d) => html`<article class="card">${d.icon}
        <div class="lines">
          <div class="line">${fit(d.date, 87)}</div>
          <div class="line">${fit(`Average Temperature: ${d.t}°F`, 243)}</div>
          <div class="line">${fit(`Average Wind Speed: ${d.s}`, d.sw)}</div>
          <div class="line">${fit("mph", 36)}</div>
          <div class="line">${fit(`Average Humidity: ${d.h}%`, d.hw)}</div>
        </div></article>`)}</section>
      <section class="list">${cities.map(([c, w]) => html`<div class="line">${fit(c, w)}</div>`)}</section>
      <button class="btn hist">History</button>
    </main>`;
  }

  private renderTaskbar() {
    return html`<footer class="task">
      <div class="wx">${pic(30, 28, "0 0 30 28", svg`<defs><linearGradient id="wx" x1="0" y1="0" x2="1" y2="1"><stop offset="0" stop-color="#a8b0b9"/><stop offset="1" stop-color="#747c86"/></linearGradient></defs><circle cx="14" cy="14" r="13" fill="url(#wx)"/><path d="M16 23Q12.6 23 12.6 19.6Q12.8 17 15.8 16.6Q17 12.4 20.6 12.4Q24 12.4 25 15.4Q29.2 15.6 29.2 19.4Q29 23 25.6 23Z" fill="#eef1f4"/>`)}</div>
      <div class="start">${pic(29, 29, "0 0 29 29", svg`<defs><linearGradient id="wn" x1="0" y1="0" x2="29" y2="29" gradientUnits="userSpaceOnUse"><stop offset="0" stop-color="#8fe4fc"/><stop offset=".5" stop-color="#4cc8fa"/><stop offset="1" stop-color="#0b8ef8"/></linearGradient></defs><path d="M1 0H14V14H0V1ZM15 0H28L29 1V14H15ZM0 15H14V29H1L0 28ZM15 15H29V28L28 29H15Z" fill="url(#wn)"/>`)}</div>
      <div class="find">${pic(20, 20, "0 0 20 20", svg`<circle cx="9" cy="8.4" r="6.8" fill="none" stroke="#222" stroke-width="1.8"/><path d="M13.6 13.4 18.6 18.6" stroke="#222" stroke-width="2.2"/>`)}${fit("Search", 51)}</div>
      <div class="apps">${apps.map((a) => html`<div class="cell ${a.mark === "on" ? "on" : ""}">${a.icon}${a.mark ? html`<span class="pip ${a.mark}"></span>` : nothing}</div>`)}</div>
      <div class="tray">
        ${pic(14, 8, "0 0 14 8", svg`<path d="M1 7 7 1.4 13 7" fill="none" stroke="#fff" stroke-width="1.9" stroke-linecap="round"/>`)}
        <span class="drive">${pic(20, 14, "23.4 3.4 20 14", svg`<path d="M29 11Q29 4 35 3.6Q40 3.6 41 8L43 11Z" fill="#8a8a8a"/><path d="M24 13Q23 8.6 27.6 8.4Q30 6.4 33 8.4L41 12.4 27 17.4Z" fill="#b8b8b8"/><path d="M40 8.4Q43.4 9 43.6 13L38 13Z" fill="#a0a0a0"/><path d="M27 17Q23 17 23.4 13.4Q30 13.6 34 10.6Q37 9.4 39 11.6Q43 12 43.2 14.4Q43 17 40.4 17Z" fill="#fff"/>`)}</span>
        ${pic(20, 20, "0 0 20 20", svg`<g transform="translate(-3 0)" fill="none" stroke="#fff" stroke-width="1.8" stroke-linecap="round"><path d="M3.9 8.4Q13-1 22.1 8.4"/><path d="M6.9 11.6Q13 5.6 19.1 11.6"/><path d="M9.9 14.4Q13 11.2 16.1 14.4"/></g><circle cx="10" cy="16.2" r="1.7" fill="#fff"/>`)}
        <span class="sound">${pic(37, 20, "0 0 37 20", svg`<g fill="none" stroke-linecap="round"><path d="M10 7.2H13L18 3V17L13 12.8H10Z" stroke="#fff" stroke-width="1.5" stroke-linejoin="round"/><path d="M20.6 7.2Q22.4 10 20.6 12.8" stroke="#fff" stroke-width="1.5"/><path d="M23.6 5Q27 10 23.6 15M26.6 3Q31.4 10 26.6 17" stroke="#777" stroke-width="1.3"/></g>`)}</span>
        ${pic(20, 20, "0 0 20 20", svg`<path d="M7 4.4H15.6Q17.6 4.4 17.6 6.4V13.6Q17.6 15.6 15.6 15.6H3.6Q1.6 15.6 1.6 13.6V11" fill="none" stroke="#fff" stroke-width="1.5"/><path d="M7.6 6.4H15.8V13.8H3.4V11L6 9.6Z" fill="#fff"/><path d="M18.2 8H19Q20 8 20 10T19 12H18.2Z" fill="#fff"/><path d="M3.8-.4-.2 6H2.4L1 10.8 6.4 4.2H3.6L4.8-.4Z" fill="#fff"/>`)}
        <div class="clock">${fit("10:32 PM", 62)}${fit("8/23/2023", 69)}</div>
        <div class="count">20</div>
      </div>
    </footer>`;
  }

  render() {
    return html`${this.renderTabs()}${this.renderToolbar()}${this.renderPage()}${this.renderTaskbar()}`;
  }
}
